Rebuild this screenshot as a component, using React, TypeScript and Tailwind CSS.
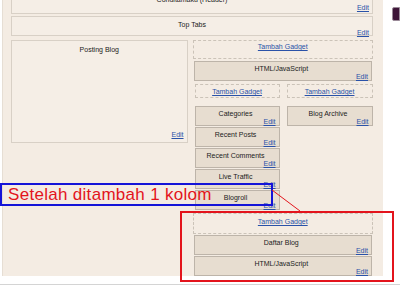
import React from "react";

const font = "font-['Liberation_Sans',Arial,sans-serif]";

function EditLink() {
    return <span className="text-[#2a52a8] underline">Edit</span>;
}

// page element box (header, tabs, posts)
function PageBox({ title, className }: { title: string; className: string }) {
    return (
        <div className={`border border-[#d8d0c6] bg-[#f5eee6] flex flex-col px-[3px] text-[7px] ${className}`}>
            <div className="text-center leading-[9px] text-[#222]">{title}</div>
            <div className="flex-1" />
            <div className="text-right leading-[8px] pb-[3px]"><EditLink /></div>
        </div>
    );
}

function Widget({ title, className = "" }: { title: string; className?: string }) {
    return (
        <div className={`h-[20px] border border-[#bdb4a9] bg-[#e7ddd0] flex flex-col pt-[3px] pr-[3px] text-[7px] ${className}`}>
            <div className="text-center leading-[8px] text-[#222]">{title}</div>
            <div className="text-right leading-[7px]"><EditLink /></div>
        </div>
    );
}

function AddGadget({ className }: { className: string }) {
    return (
        <div className={`border border-dashed border-[#cbc3b8] flex justify-center items-start text-[7px] leading-[8px] ${className}`}>
            <span className="text-[#2a52a8] underline">Tambah Gadget</span>
        </div>
    );
}

export default function App() {
    return (
        <div className={`w-[400px] h-[286px] bg-white relative overflow-hidden ${font}`}>
            <div className="flex h-[276px]">
                <div className="ml-[2px] w-[382px] bg-[#f4ece3] border-l border-[#e6ded4] pl-[8px] pr-[10px] overflow-hidden flex flex-col">
                    {/* Header */}
                    <PageBox title="Conditamaku (Header)" className="-mt-[12px] h-[26px] pt-[6px]" />
                    {/* Top Tabs */}
                    <PageBox title="Top Tabs" className="mt-[2px] h-[20px] pt-[3px]" />

                    <div className="mt-[4px] flex gap-[5px]">
                        {/* Posting Blog */}
                        <PageBox title="Posting Blog" className="w-[177px] h-[103px] pt-[4px]" />

                        {/* Sidebar */}
                        <div className="w-[181px] flex flex-col">
                            <AddGadget className="h-[19px] pt-[2px]" />
                            <Widget title="HTML/JavaScript" className="mt-[2px] mx-[1px]" />

                            <div className="mt-[3px] flex gap-[7px] pl-[2px]">
                                <div className="w-[85px] flex flex-col gap-[1px]">
                                    <AddGadget className="h-[14px] pt-[3px] mb-[7px]" />
                                    <Widget title="Categories" />
                                    <Widget title="Recent Posts" />
                                    <Widget title="Recent Comments" />
                                    <Widget title="Live Traffic" />
                                    <Widget title="Blogroll" />
                                </div>
                                <div className="w-[86px] flex flex-col">
                                    <AddGadget className="h-[14px] pt-[3px] mb-[8px]" />
                                    <Widget title="Blog Archive" />
                                </div>
                            </div>

                            <AddGadget className="mt-[3px] h-[21px] pt-[4px]" />
                            <Widget title="Daftar Blog" className="mt-[1px] mx-[1px]" />
                            <Widget title="HTML/JavaScript" className="mt-[1px] mx-[1px]" />
                        </div>
                    </div>
                </div>
                <div className="ml-[9px] mt-[7px] w-[8px] h-[14px] bg-[#3e1538] rounded-l-[2px] border border-[#9a8a98]" />
            </div>
            <div className="mt-[8px] h-[1px] bg-[#d4d4d4]" />

            {/* annotation overlays */}
            <div className="absolute left-0 top-[183px] w-[273px] h-[23px] border-2 border-[#1414d8] pl-[6px]">
                <span className="block text-[17px] leading-[19px] tracking-[0.3px] text-[#e3141c]">Setelah ditambah 1 kolom</span>
            </div>
            <svg className="absolute left-0 top-0" width="400" height="286">
                <line x1="272" y1="190" x2="300" y2="211" stroke="#e3141c" strokeWidth="1" />
            </svg>
            <div className="absolute left-[180px] top-[211px] w-[214px] h-[71px] border-2 border-[#e3141c]" />
        </div>
    );
}
